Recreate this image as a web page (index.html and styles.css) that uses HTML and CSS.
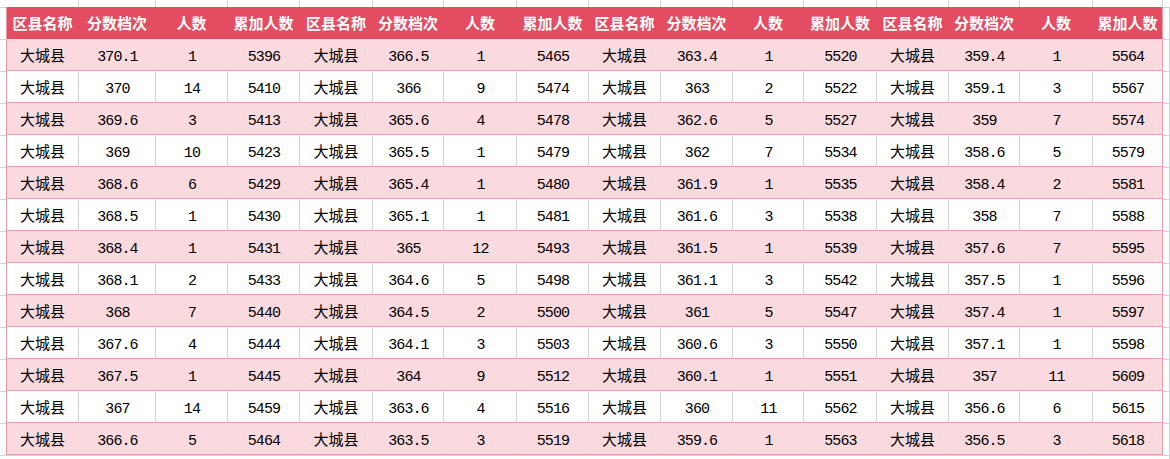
FILE: index.html
```html
<!DOCTYPE html>
<html lang="zh-CN">
<head>
<meta charset="utf-8">
<title>分数档次表</title>
<link rel="stylesheet" href="styles.css">
</head>
<body>
<div class="sheet">
  <div class="strip">
    <span class="w72"></span><span class="w77"></span><span class="w72"></span><span class="w72"></span>
    <span class="w73"></span><span class="w71"></span><span class="w73"></span><span class="w72"></span>
    <span class="w72"></span><span class="w72"></span><span class="w71"></span><span class="w73"></span>
    <span class="w72"></span><span class="w71"></span><span class="w73"></span><span class="w70"></span>
  </div>
  <table class="grid">
    <thead>
      <tr>
        <th class="w72">区县名称</th><th class="w77">分数档次</th><th class="w72">人数</th><th class="w72">累加人数</th>
        <th class="w73">区县名称</th><th class="w71">分数档次</th><th class="w73">人数</th><th class="w72">累加人数</th>
        <th class="w72">区县名称</th><th class="w72">分数档次</th><th class="w71">人数</th><th class="w73">累加人数</th>
        <th class="w72">区县名称</th><th class="w71">分数档次</th><th class="w73">人数</th><th class="w70">累加人数</th>
      </tr>
    </thead>
    <tbody>
      <tr><td>大城县</td><td class="n">370.1</td><td class="n">1</td><td class="n">5396</td><td>大城县</td><td class="n">366.5</td><td class="n">1</td><td class="n">5465</td><td>大城县</td><td class="n">363.4</td><td class="n">1</td><td class="n">5520</td><td>大城县</td><td class="n">359.4</td><td class="n">1</td><td class="n">5564</td></tr>
      <tr><td>大城县</td><td class="n">370</td><td class="n">14</td><td class="n">5410</td><td>大城县</td><td class="n">366</td><td class="n">9</td><td class="n">5474</td><td>大城县</td><td class="n">363</td><td class="n">2</td><td class="n">5522</td><td>大城县</td><td class="n">359.1</td><td class="n">3</td><td class="n">5567</td></tr>
      <tr><td>大城县</td><td class="n">369.6</td><td class="n">3</td><td class="n">5413</td><td>大城县</td><td class="n">365.6</td><td class="n">4</td><td class="n">5478</td><td>大城县</td><td class="n">362.6</td><td class="n">5</td><td class="n">5527</td><td>大城县</td><td class="n">359</td><td class="n">7</td><td class="n">5574</td></tr>
      <tr><td>大城县</td><td class="n">369</td><td class="n">10</td><td class="n">5423</td><td>大城县</td><td class="n">365.5</td><td class="n">1</td><td class="n">5479</td><td>大城县</td><td class="n">362</td><td class="n">7</td><td class="n">5534</td><td>大城县</td><td class="n">358.6</td><td class="n">5</td><td class="n">5579</td></tr>
      <tr><td>大城县</td><td class="n">368.6</td><td class="n">6</td><td class="n">5429</td><td>大城县</td><td class="n">365.4</td><td class="n">1</td><td class="n">5480</td><td>大城县</td><td class="n">361.9</td><td class="n">1</td><td class="n">5535</td><td>大城县</td><td class="n">358.4</td><td class="n">2</td><td class="n">5581</td></tr>
      <tr><td>大城县</td><td class="n">368.5</td><td class="n">1</td><td class="n">5430</td><td>大城县</td><td class="n">365.1</td><td class="n">1</td><td class="n">5481</td><td>大城县</td><td class="n">361.6</td><td class="n">3</td><td class="n">5538</td><td>大城县</td><td class="n">358</td><td class="n">7</td><td class="n">5588</td></tr>
      <tr><td>大城县</td><td class="n">368.4</td><td class="n">1</td><td class="n">5431</td><td>大城县</td><td class="n">365</td><td class="n">12</td><td class="n">5493</td><td>大城县</td><td class="n">361.5</td><td class="n">1</td><td class="n">5539</td><td>大城县</td><td class="n">357.6</td><td class="n">7</td><td class="n">5595</td></tr>
      <tr><td>大城县</td><td class="n">368.1</td><td class="n">2</td><td class="n">5433</td><td>大城县</td><td class="n">364.6</td><td class="n">5</td><td class="n">5498</td><td>大城县</td><td class="n">361.1</td><td class="n">3</td><td class="n">5542</td><td>大城县</td><td class="n">357.5</td><td class="n">1</td><td class="n">5596</td></tr>
      <tr><td>大城县</td><td class="n">368</td><td class="n">7</td><td class="n">5440</td><td>大城县</td><td class="n">364.5</td><td class="n">2</td><td class="n">5500</td><td>大城县</td><td class="n">361</td><td class="n">5</td><td class="n">5547</td><td>大城县</td><td class="n">357.4</td><td class="n">1</td><td class="n">5597</td></tr>
      <tr><td>大城县</td><td class="n">367.6</td><td class="n">4</td><td class="n">5444</td><td>大城县</td><td class="n">364.1</td><td class="n">3</td><td class="n">5503</td><td>大城县</td><td class="n">360.6</td><td class="n">3</td><td class="n">5550</td><td>大城县</td><td class="n">357.1</td><td class="n">1</td><td class="n">5598</td></tr>
      <tr><td>大城县</td><td class="n">367.5</td><td class="n">1</td><td class="n">5445</td><td>大城县</td><td class="n">364</td><td class="n">9</td><td class="n">5512</td><td>大城县</td><td class="n">360.1</td><td class="n">1</td><td class="n">5551</td><td>大城县</td><td class="n">357</td><td class="n">11</td><td class="n">5609</td></tr>
      <tr><td>大城县</td><td class="n">367</td><td class="n">14</td><td class="n">5459</td><td>大城县</td><td class="n">363.6</td><td class="n">4</td><td class="n">5516</td><td>大城县</td><td class="n">360</td><td class="n">11</td><td class="n">5562</td><td>大城县</td><td class="n">356.6</td><td class="n">6</td><td class="n">5615</td></tr>
      <tr><td>大城县</td><td class="n">366.6</td><td class="n">5</td><td class="n">5464</td><td>大城县</td><td class="n">363.5</td><td class="n">3</td><td class="n">5519</td><td>大城县</td><td class="n">359.6</td><td class="n">1</td><td class="n">5563</td><td>大城县</td><td class="n">356.5</td><td class="n">3</td><td class="n">5618</td></tr>
    </tbody>
  </table>
</div>
</body>
</html>
```

FILE: styles.css
```css
html, body {
  margin: 0;
  padding: 0;
}

body {
  width: 1170px;
  height: 459px;
  overflow: hidden;
  background-color: #ffffff;
  background-image:
    linear-gradient(90deg, transparent 1169px, #cdd2dc 1169px),
    repeating-linear-gradient(180deg, #cdd2dc 0 1px, transparent 1px 32px);
  background-position: 0 0, 0 7px;
  background-repeat: no-repeat, repeat-y;
  font-family: "Noto Sans CJK SC", "Liberation Sans", sans-serif;
  color: #000;
}

.sheet {
  padding-left: 6px;
}

.strip {
  display: flex;
  height: 7px;
  margin-left: 1px;
  background: #fff;
}

.strip span {
  box-sizing: border-box;
  height: 7px;
  border-right: 1px solid #cdd2dc;
  flex: none;
}

.w70 { width: 70px; }
.w71 { width: 71px; }
.w72 { width: 72px; }
.w73 { width: 73px; }
.w77 { width: 77px; }

.grid {
  table-layout: fixed;
  border-collapse: separate;
  border-spacing: 0;
  width: 1157px;
  border-left: 1px solid #ec9aa6;
  background: #fff;
}

.grid th,
.grid td {
  box-sizing: border-box;
  height: 32px;
  padding: 0;
  text-align: center;
  vertical-align: middle;
  white-space: nowrap;
  overflow: hidden;
  border-bottom: 1px solid #ec9aa6;
}

.grid th {
  background: #e44d61;
  color: #fff;
  font-size: 15px;
  font-weight: 700;
  border-right: 1px solid #e44d61;
  border-bottom-color: #e44d61;
}

.grid td {
  font-size: 15px;
  border-right: 1px solid #cdd2dc;
}

.grid td.n {
  font-family: "Liberation Mono", "DejaVu Sans Mono", monospace;
  font-size: 15px;
  letter-spacing: -0.9px;
  text-indent: 0.9px;
  padding-top: 6px;
}

.grid tbody tr:nth-child(odd) td {
  background: #fadadf;
  border-right-color: #fadadf;
}

.grid th:last-child,
.grid tbody tr td:last-child {
  border-right-color: #ec9aa6;
}
```
